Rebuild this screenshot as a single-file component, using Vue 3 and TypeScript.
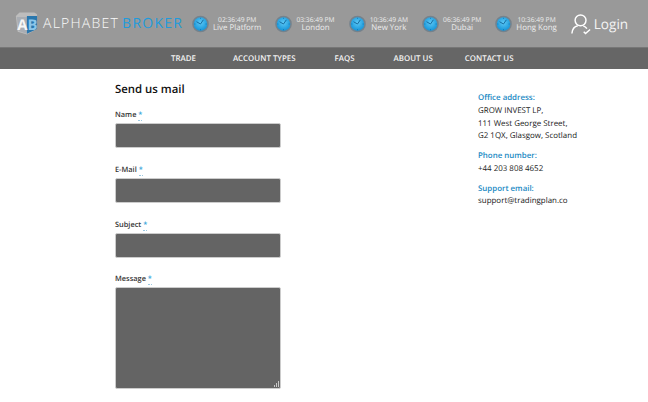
<script setup lang="ts">
const clocks = [
  { time: '02:36:49 PM', city: 'Live Platform' },
  { time: '03:36:49 PM', city: 'London' },
  { time: '10:36:49 AM', city: 'New York' },
  { time: '06:36:49 PM', city: 'Dubai' },
  { time: '10:36:49 PM', city: 'Hong Kong' },
];

const menu = ['TRADE', 'ACCOUNT TYPES', 'FAQS', 'ABOUT US', 'CONTACT US'];

const fields = ['Name', 'E-Mail', 'Subject'];
</script>

<template>
  <div class="page">
    <header class="top">
      <div class="logo">
        <svg class="logo-mark" width="24" height="25" viewBox="0 0 26 26">
          <path d="M2 5 L6 1 H22 L25 3 V19 L14 25 L4 22 Z" fill="#bdbdbd" />
          <path d="M3 6 H14 V24 L5 21 Z" fill="#a9adb3" />
          <path d="M14 5 H25 V19 L14 24 Z" fill="#2a77ad" />
          <text x="3.5" y="20" class="mark-a">A</text>
          <text x="14.5" y="20" class="mark-b">B</text>
        </svg>
        <span class="logo-text">ALPHABET<span class="logo-blue">BROKER</span></span>
      </div>

      <div class="clocks">
        <div v-for="c in clocks" :key="c.city" class="clock">
          <svg width="17" height="18" viewBox="0 0 18 18">
            <defs>
              <radialGradient id="face" cx="50%" cy="40%" r="60%">
                <stop offset="0%" stop-color="#5cc8f5" />
                <stop offset="100%" stop-color="#1594d8" />
              </radialGradient>
            </defs>
            <circle cx="9" cy="9" r="8.8" fill="#75828c" />
            <circle cx="9" cy="9" r="7.2" fill="url(#face)" />
            <path d="M9 9 L4.8 6.6 M9 9 L12 4.6" stroke="#0e5f92" stroke-width="0.9" fill="none" />
            <path d="M9 2.4 V3.6 M9 14.4 V15.6 M2.4 9 H3.6 M14.4 9 H15.6" stroke="#0e6fa8" stroke-width="0.7" />
          </svg>
          <div class="clock-text">
            <span class="time">{{ c.time }}</span>
            <span class="city">{{ c.city }}</span>
          </div>
        </div>
      </div>

      <div class="login">
        <svg width="20" height="22" viewBox="0 0 22 23" fill="none" stroke="#fff" stroke-width="1.6">
          <circle cx="10.5" cy="7.5" r="6" />
          <path d="M1 22 C1.5 16.5 4.5 14 7.5 13.5 M13.5 13.5 C15 14 16.5 15 17.5 16.5" />
          <path d="M14 20 L16 22 L21 17.5" />
        </svg>
        <span>Login</span>
      </div>
    </header>

    <nav class="menu">
      <a v-for="m in menu" :key="m">{{ m }}</a>
    </nav>

    <main class="content">
      <form class="mail" @submit.prevent>
        <h2>Send us mail</h2>
        <div v-for="f in fields" :key="f" class="field">
          <label>{{ f }} <em>*</em></label>
          <input type="text" />
        </div>
        <div class="field message">
          <label>Message <em>*</em></label>
          <div class="area">
            <textarea></textarea>
            <svg class="grip" width="7" height="7" viewBox="0 0 7 7" fill="#c8c8c8">
              <rect x="5" y="0" width="1" height="6" />
              <rect x="3" y="2" width="1" height="4" />
              <rect x="1" y="4" width="1" height="2" />
            </svg>
          </div>
        </div>
      </form>

      <aside class="info">
        <h4>Office address:</h4>
        <p>GROW INVEST LP,<br />111 West George Street,<br />G2 1QX, Glasgow, Scotland</p>
        <h4>Phone number:</h4>
        <p>+44 203 808 4652</p>
        <h4>Support email:</h4>
        <p>support@tradingplan.co</p>
      </aside>
    </main>
  </div>
</template>

<style>
html, body {
  margin: 0;
  background: #fff;
}
</style>

<style scoped>
.page {
  width: 648px;
  height: 402px;
  overflow: hidden;
  font-family: "Open Sans", sans-serif;
  color: #222;
  text-rendering: geometricPrecision;
}

.top {
  height: 47px;
  box-sizing: border-box;
  background: #999;
  display: flex;
  align-items: center;
  padding: 0 0 0 14px;
}

.logo {
  width: 178px;
  display: flex;
  align-items: center;
  gap: 5px;
  flex: none;
}
.mark-a, .mark-b {
  font: bold 16px "Open Sans", sans-serif;
}
.mark-a { fill: #f6f6f6; }
.mark-b { fill: #8cc6ea; }
.logo-text {
  font-size: 14px;
  font-weight: 300;
  letter-spacing: 1.25px;
  color: #fafafa;
  white-space: nowrap;
}
.logo-blue {
  color: #1f9bdc;
  font-weight: 400;
  margin-left: 3px;
}

.clocks {
  display: flex;
  gap: 14px;
  flex: none;
}
.clock {
  display: flex;
  align-items: center;
  gap: 4px;
  color: #ececec;
}
.clock svg { flex: none; }
.clock-text {
  display: flex;
  flex-direction: column;
  align-items: center;
  line-height: 9px;
  white-space: nowrap;
}
.time { font-size: 6.7px; }
.city { font-size: 7.9px; }

.login {
  display: flex;
  align-items: center;
  gap: 3px;
  margin-left: 14px;
  color: #f4f4f4;
  font-size: 13.6px;
  font-weight: 400;
}

.menu {
  height: 22px;
  box-sizing: border-box;
  background: #666;
  border-top: 1px solid #777;
  padding-left: 171px;
  display: flex;
  align-items: center;
  gap: 38px;
  color: #f2f2f2;
  font-size: 7.9px;
  font-weight: 600;
}
.menu a:nth-child(2) { margin-left: -1px; }
.menu a:nth-child(3) { margin-left: 1px; }
.menu a:nth-child(4) { margin-left: 1px; }
.menu a:last-child { margin-left: -6px; }

.content {
  display: flex;
  padding: 12px 0 0 115px;
}
.mail {
  width: 166px;
  flex: none;
}
h2 {
  margin: 0 0 11px;
  font-size: 11.4px;
  line-height: 17px;
  font-weight: 600;
  color: #111;
}
.field {
  margin-bottom: 16px;
}
label {
  display: block;
  height: 12px;
  line-height: 12px;
  margin-bottom: 2px;
  font-size: 7.4px;
  font-weight: 600;
  color: #333;
}
label em {
  font-style: normal;
  color: #2b9ed8;
  border-bottom: 1px dotted #9cc9e2;
}
.message {
  margin-top: -1px;
}
input, textarea {
  display: block;
  width: 100%;
  box-sizing: border-box;
  background: #646464;
  border: 1px solid #ccc;
  border-radius: 2px;
  margin: 0;
  padding: 0;
}
input { height: 25px; }
textarea {
  height: 102px;
  resize: none;
}
.area {
  position: relative;
}
.grip {
  position: absolute;
  right: 1px;
  bottom: 1px;
}

.info {
  margin-left: 197px;
  padding-top: 11px;
  font-size: 7.95px;
  line-height: 12.75px;
}
.info h4 {
  margin: 0;
  font-size: 7.9px;
  font-weight: 600;
  color: #1b8ac4;
}
.info p {
  margin: 0 0 7px;
  color: #222;
}
</style>
